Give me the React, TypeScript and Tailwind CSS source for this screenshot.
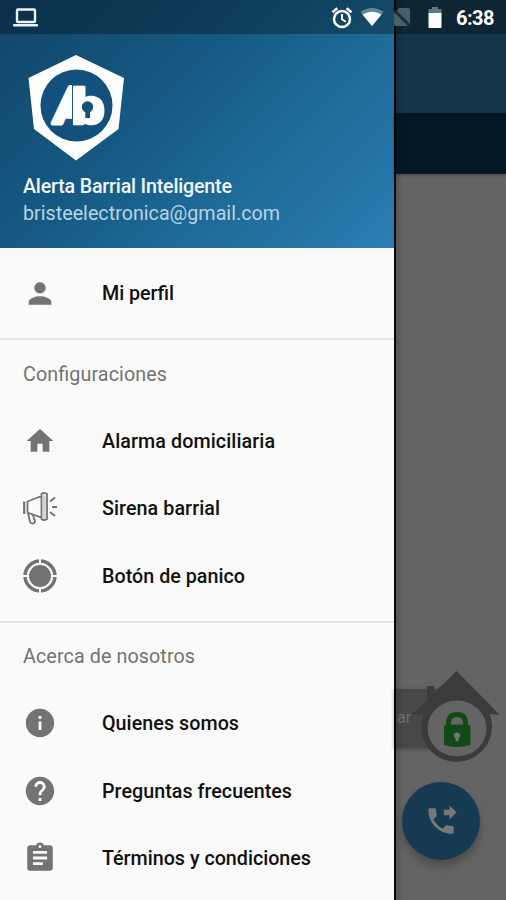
import type { ReactNode } from "react";
import { MdAssignment, MdHelp, MdHome, MdInfo, MdPerson, MdPhoneForwarded } from "react-icons/md";

function Row({ icon, label, width }: { icon: ReactNode; label: string; width: number }) {
  return (
    <li className="flex h-[67.5px] shrink-0 items-center pl-[23px] text-[#737373]">
      <span className="flex size-[34px] items-center justify-center">{icon}</span>
      <svg className="ml-[45px] h-[30px] w-[260px]" aria-label={label}>
        <text x="0" y="22" textLength={width} className="fill-[#111111] text-[19.7px] font-medium">{label}</text>
      </svg>
    </li>
  );
}

function Heading({ label, width }: { label: string; width: number }) {
  return (
    <div className="flex h-[69px] items-center border-t-2 border-[#e3e3e3] pl-[23px]">
      <svg className="h-[30px] w-[260px]">
        <text x="0" y="22" textLength={width} className="fill-[#737373] text-[19.7px]">{label}</text>
      </svg>
    </div>
  );
}

function Logo() {
  return (
    <svg viewBox="0 0 96 106" className="ml-[5px] h-[106px] w-[96px]">
      <clipPath id="left-letter">
        <rect x="20" y="26" width="24" height="46" />
      </clipPath>
      <path d="M48 0 L96 23 L90.5 74 L48 105.500 L6 74 L0.500 23 Z" fill="#fff" />
      <circle cx="48.500" cy="50.500" r="36" fill="#13507c" />
      <g fill="#fff" stroke="#fff" strokeLinejoin="round" className="font-black">
        <g clipPath="url(#left-letter)">
          <text transform="translate(25 68) skewX(-8)" fontSize="50" strokeWidth="5" textLength="31" lengthAdjust="spacingAndGlyphs">A</text>
        </g>
        <text x="43.500" y="68.500" fontSize="50" strokeWidth="2.500" textLength="33" lengthAdjust="spacingAndGlyphs">b</text>
      </g>
      <circle cx="60" cy="54" r="12" fill="#fff" />
      <path d="M44.500 30 V69" stroke="#13507c" strokeWidth="0.800" />
      <circle cx="59.500" cy="52" r="5.700" fill="#13507c" />
      <path d="M57.300 54 H62 V63 H57.300 Z" fill="#13507c" />
    </svg>
  );
}

function Siren() {
  return (
    <svg viewBox="0 0 34 34" className="size-[34px]" fill="none" stroke="currentColor" strokeWidth="1.800">
      <path d="M1.200 10.500 V23" strokeWidth="2.200" />
      <path d="M4.500 10.500 L18.500 5 V26.500 L4.500 21.500 Z M18.500 3 Q21 0.800 24 3 V28 Q21 30 18.500 28 Z M5 22 L7 31 Q10 34.500 12 30.500 L10 24" />
      <path d="M21.300 4.500 V27.500" stroke="#d2d2d2" strokeWidth="3" />
      <path d="M27 10.500 L32 6.500 M29 16 H34 M27 21 L32 25" strokeWidth="2" />
    </svg>
  );
}

function Panic() {
  return (
    <svg viewBox="0 0 34 34" className="size-[34px]">
      <circle cx="17" cy="17" r="15" fill="none" stroke="currentColor" strokeWidth="3.500" />
      <circle cx="17" cy="17" r="11" fill="currentColor" />
      <path d="M17 0 V5 M17 29 V34 M0 17 H5 M29 17 H34" stroke="#fafafa" strokeWidth="2" />
    </svg>
  );
}

function Alarm() {
  return (
    <svg viewBox="0 0 24 24" className="mt-px ml-[291px] size-[24px]" fill="none" stroke="currentColor">
      <circle cx="12" cy="13" r="8" strokeWidth="2.500" />
      <path d="M2.500 6.200 L7.300 2.200 M21.500 6.200 L16.700 2.200" strokeWidth="2.500" />
      <path d="M12 8 V13.300 L15.800 15.700" strokeWidth="1.900" />
    </svg>
  );
}

function StatusBar() {
  return (
    <div className="absolute inset-x-0 top-0 flex h-[34px] items-center bg-black/30 text-white">
      <svg viewBox="0 0 26 20" className="ml-[13px] mt-px h-[20px] w-[26px]">
        <path d="M0.500 16.500 H24.500 V18 H0.500 Z" fill="#eef5ff" stroke="#eef5ff" />
        <rect x="4" y="1.500" width="18" height="12.500" rx="1" fill="none" stroke="#eef5ff" strokeWidth="2.400" />
      </svg>
      <Alarm />
      <svg viewBox="0 0 24 20" className="ml-[6px] h-[20px] w-[24px]">
        <path d="M0.500 5 Q12 -3 23.500 5 L12 19 Z" fill="#5f87a3" />
        <path d="M2.500 7.500 Q12 2 21.500 7.500 L12 19 Z" fill="#fff" />
      </svg>
      <svg viewBox="0 0 20 22" className="ml-[8px] h-[22px] w-[20px]">
        <path d="M7 2 H16 Q18 2 18 4 V18 L5 5 Z M2 6 L16 20 H4 Q2 20 2 18 Z" fill="#49606c" />
        <path d="M1 3 L18.500 20.500" stroke="#183340" strokeWidth="1.500" />
      </svg>
      <svg viewBox="0 0 14 22" className="mt-[2px] ml-[16px] h-[22px] w-[14px]">
        <path d="M4 0 H10 V2 H13.500 V7 H0.500 V2 H4 Z" fill="#627782" />
        <path d="M0.500 6 H13.500 V20 Q13.500 21 12.500 21 H1.500 Q0.500 21 0.500 20 Z" fill="#fff" />
      </svg>
      <svg className="ml-[14px] h-[26px] w-[42px]">
        <text x="0" y="20.500" textLength="38.500" className="fill-white text-[20px] font-bold">6:38</text>
      </svg>
    </div>
  );
}

function Backdrop() {
  return (
    <div className="relative min-w-0 flex-1 bg-[#646464]">
      <div className="h-[113px] bg-[#153549]" />
      <div className="h-[61px] bg-[#041724] shadow-[0_1px_3px_rgba(0,0,0,0.300)]" />
      <div className="absolute top-[689px] left-0 h-[59px] w-[60px] bg-[#484848] pt-[17px] pl-[3px] text-[16px] leading-[24px] text-[#6e6e6e] shadow-[0_1px_4px_rgba(0,0,0,0.300)]">
        ar
      </div>
      <svg viewBox="0 0 92 94" className="absolute top-[669px] left-[18px] h-[94px] w-[92px]">
        <path d="M-1 46 L15 32 V17 H22 V24 L44.500 2 L88 46 L79 45 H10 Z" fill="#3b3b3b" />
        <circle cx="44.500" cy="57.500" r="35.500" fill="#3b3b3b" />
        <ellipse cx="45" cy="59.500" rx="29.500" ry="28" fill="#646464" />
        <path d="M36.500 59 V54 Q36.500 45.500 45 45.500 Q53.500 45.500 53.500 54 V59" fill="none" stroke="#124a16" strokeWidth="5" />
        <path d="M32 56.500 Q45 54.500 58.500 56.500 V76 Q45 80 32 76 Z" fill="#124a16" />
        <circle cx="45" cy="66.500" r="3" fill="#777777" />
        <path d="M43.500 67 H46.500 V72 H43.500 Z" fill="#777777" />
      </svg>
      <div className="absolute top-[782px] left-[8px] flex size-[78px] items-center justify-center rounded-full bg-[#153a51] text-[#777777] shadow-[0_6px_9px_rgba(0,0,0,0.250)]">
        <MdPhoneForwarded className="size-[34px]" />
      </div>
      <div className="absolute inset-y-0 left-0 w-[9px] bg-linear-to-r from-black/20 to-transparent" />
      <div className="absolute inset-y-0 left-0 w-[1.500px] bg-black/90" />
    </div>
  );
}

export default function App() {
  return (
    <main className="relative flex h-[900px] w-[506px] overflow-hidden font-[Roboto,sans-serif]">
      <aside className="flex w-[394px] shrink-0 flex-col bg-[#fafafa]">
        <header className="h-[247.5px] shrink-0 bg-[linear-gradient(135deg,#114469_0%,#155a84_42%,#1c6793_60%,#2b7db4_100%)] pt-[55px] pl-[23px]">
          <Logo />
          <svg className="mt-[11px] h-[56px] w-[280px]">
            <text x="0" y="21" textLength="209" className="fill-[#f0f7ff] text-[19.7px] font-medium">Alerta Barrial Inteligente</text>
            <text x="0" y="48" textLength="257" className="fill-[#b9d4e6] text-[19.7px]">bristeelectronica@gmail.com</text>
          </svg>
        </header>
        <ul className="pt-[12px] pb-[11px]">
          <Row icon={<MdPerson className="size-[35px]" />} label="Mi perfil" width={72} />
        </ul>
        <Heading label="Configuraciones" width={144} />
        <ul className="pb-[11px]">
          <Row icon={<MdHome className="size-[32px]" />} label="Alarma domiciliaria" width={173} />
          <Row icon={<Siren />} label="Sirena barrial" width={118} />
          <Row icon={<Panic />} label="Botón de panico" width={143} />
        </ul>
        <Heading label="Acerca de nosotros" width={172} />
        <ul>
          <Row icon={<MdInfo className="size-[34px]" />} label="Quienes somos" width={137} />
          <Row icon={<MdHelp className="size-[34px]" />} label="Preguntas frecuentes" width={190} />
          <Row icon={<MdAssignment className="size-[34px]" />} label="Términos y condiciones" width={209} />
        </ul>
      </aside>
      <Backdrop />
      <StatusBar />
    </main>
  );
}
